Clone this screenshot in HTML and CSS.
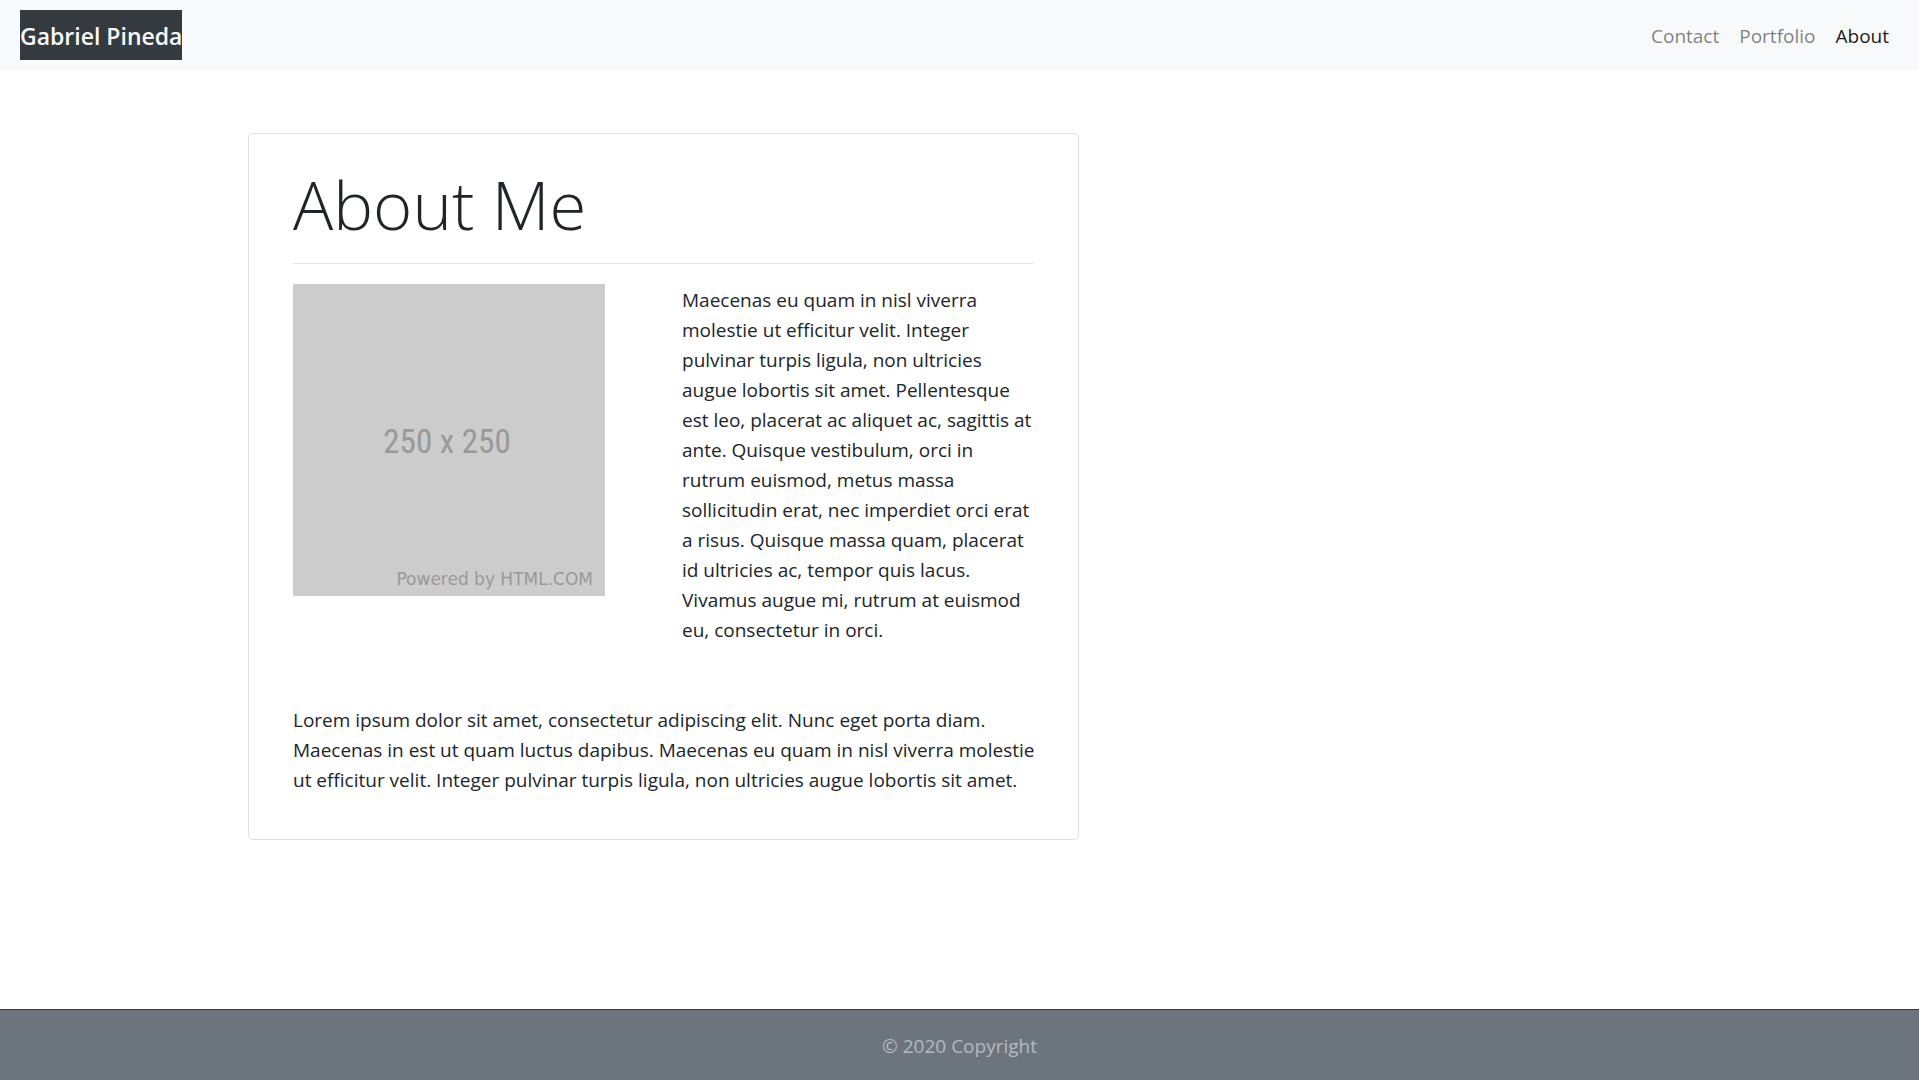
FILE: index.html
```html
<!DOCTYPE html>
<html lang="en">
<head>
  <meta charset="utf-8">
  <meta name="viewport" content="width=device-width, initial-scale=1">
  <title>Gabriel Pineda</title>
  <link rel="stylesheet" href="styles.css">
</head>
<body>
  <header class="navbar">
    <a class="brand" href="#">Gabriel Pineda</a>
    <nav class="nav">
      <a class="nav-link" href="#">Contact</a>
      <a class="nav-link" href="#">Portfolio</a>
      <a class="nav-link active" href="#" aria-current="page">About</a>
    </nav>
  </header>
  <main class="container">
    <section class="card">
      <h1 class="title">About Me</h1>
      <hr class="rule">
      <div class="row">
        <div class="placeholder">
          <span class="dimensions">250 x 250</span>
          <span class="credit">Powered by HTML.COM</span>
        </div>
        <p class="text">Maecenas eu quam in nisl viverra molestie ut efficitur velit. Integer pulvinar turpis ligula, non ultricies augue lobortis sit amet. Pellentesque est leo, placerat ac aliquet ac, sagittis at ante. Quisque vestibulum, orci in rutrum euismod, metus massa sollicitudin erat, nec imperdiet orci erat a risus. Quisque massa quam, placerat id ultricies ac, tempor quis lacus. Vivamus augue mi, rutrum at euismod eu, consectetur in orci.</p>
      </div>
      <p class="text summary">Lorem ipsum dolor sit amet, consectetur adipiscing elit. Nunc eget porta diam. Maecenas in est ut quam luctus dapibus. Maecenas eu quam in nisl viverra molestie ut efficitur velit. Integer pulvinar turpis ligula, non ultricies augue lobortis sit amet.</p>
    </section>
  </main>
  <footer class="footer">© 2020 Copyright</footer>
</body>
</html>
```
FILE: styles.css
```css
* {
  box-sizing: border-box;
}

body {
  display: flex;
  flex-direction: column;
  min-height: 100vh;
  margin: 0;
  background: #fff;
  color: #212529;
  font-family: "Segoe UI", "Open Sans", "Noto Sans", sans-serif;
  font-size: 19px;
  line-height: 30px;
}

.navbar {
  display: flex;
  flex-wrap: wrap;
  align-items: center;
  justify-content: space-between;
  padding: 10px 20px;
  background: #f8f9fa;
}

.brand {
  padding: 11px 0 9px;
  background: #343a40;
  color: #f8f9fa;
  font-size: 23px;
  font-weight: 600;
  text-decoration: none;
}

.nav {
  display: flex;
}

.nav-link {
  padding: 11px 10px 9px;
  color: rgba(0, 0, 0, 0.5);
  text-decoration: none;
}

.nav-link.active {
  color: rgba(0, 0, 0, 0.9);
}

.container {
  flex: 1;
  width: 100%;
  max-width: 1423px;
  margin: 0 auto;
  padding: 63px 0;
}

.card {
  width: 58.4%;
  min-width: 340px;
  padding: 28px 44px;
  border: 1px solid #dfdfdf;
  border-radius: 5px;
}

.title {
  margin: 0;
  font-size: 67px;
  font-weight: 300;
  line-height: 84px;
}

.rule {
  margin: 17px 0 20px;
  border: 0;
  border-top: 1px solid #e5e5e5;
}

.row {
  display: grid;
  grid-template-columns: 1fr 1fr;
  gap: 37px;
  margin-bottom: 59px;
}

.placeholder {
  display: grid;
  grid-template-rows: 1fr auto 1fr;
  width: 100%;
  max-width: 312px;
  aspect-ratio: 1;
  padding: 6px 4px 2px;
  background: #ccc;
  color: #999;
}

.dimensions {
  grid-row: 2;
  justify-self: center;
  padding-right: 4px;
  font-family: "Roboto Condensed", Roboto, sans-serif;
  font-size: 33px;
  line-height: 40px;
}

.credit {
  grid-row: 3;
  align-self: end;
  justify-self: end;
  padding-right: 8px;
  font-family: "DejaVu Sans", sans-serif;
  font-size: 17px;
  line-height: 30px;
}

.text {
  margin: 0;
  padding-top: 1px;
}

.summary {
  margin-right: -8px;
  margin-bottom: 16px;
}

.footer {
  padding: 21px 20px 19px;
  border-top: 1px solid #343a40;
  background: #6c757d;
  color: #b5babe;
  text-align: center;
}
```
